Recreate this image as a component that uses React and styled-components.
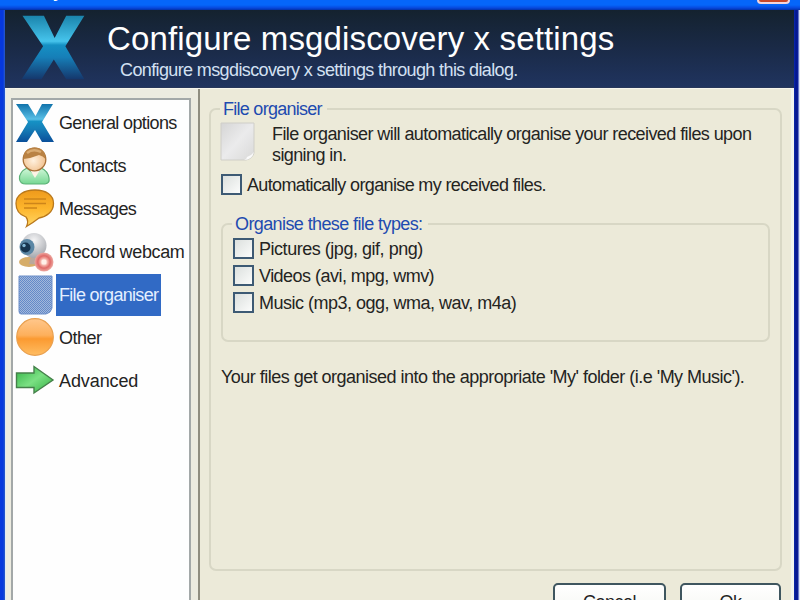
import React from 'react'
import styled, { createGlobalStyle } from 'styled-components'

const GlobalStyle = createGlobalStyle`
    * {
        box-sizing: border-box;
    }

    body {
        margin: 0;
        overflow: hidden;
        font-family: "Liberation Sans", Arial, sans-serif;
        font-size: 18px;
        color: #24241f;
    }
`;

const Window = styled.div`
    width: 800px;
    height: 600px;
    display: flex;
    flex-direction: column;
    overflow: hidden;
    background: #0a3fd0;
`;

const TitleBar = styled.div`
    flex: none;
    position: relative;
    height: 10px;
    background: linear-gradient(#0566fa 0, #0566fa 5px, #0747dc 8px, #0230a8 10px);
`;

const TitleTail = styled.span`
    position: absolute;
    left: 53px;
    top: -17px;
    font-size: 17px;
    font-weight: bold;
    line-height: 20px;
    color: #fff;
`;

const CloseButton = styled.div`
    position: absolute;
    right: 10px;
    top: -20px;
    width: 33px;
    height: 24px;
    border: 2px solid #f3d5dc;
    border-radius: 4px;
    background: #c84628;
`;

const Frame = styled.div`
    flex: 1;
    min-height: 0;
    display: flex;
    flex-direction: column;
    border-left: 5px solid #0d43d4;
    border-right: 6px solid #0a1f9c;
    border-image: linear-gradient(90deg, #0638dd 0, #0638dd 3px, #2a5cc8 5px, #0a2aae 794px, #04158c 796px, #0a1f9c 798px, #c8d4f4 799px, #eef2fc 800px) 0 6 0 5;
`;

const Header = styled.header`
    flex: none;
    height: 78px;
    display: flex;
    background: linear-gradient(#14222f, #1a2a47 50%, #20345f);
    border-bottom: 1px solid #27375a;
`;

const HeaderLogo = styled.div`
    width: 102px;
    padding: 5px 0 0 15px;
`;

const HeaderText = styled.div`
    display: flex;
    flex-direction: column;
    white-space: nowrap;
`;

const Title = styled.h1`
    margin: 10px 0 0;
    font-size: 33px;
    line-height: 38px;
    font-weight: normal;
    letter-spacing: 0.15px;
    color: #fff;
`;

const Subtitle = styled.p`
    margin: 1px 0 0 13px;
    line-height: 22px;
    letter-spacing: ${(props) => props.$spacing}px;
    color: #d3e0f2;
`;

const Body = styled.div`
    flex: 1;
    min-height: 0;
    display: flex;
    background: #ecead9;
    border-top: 1px solid #f6f5ec;
`;

const Sidebar = styled.nav`
    width: 195px;
    padding: 9px 7px 0 5px;
    background: #ecebe0;
    border-right: 2px solid #8f8d80;
    border-left: 1px solid #dfe9f4;
`;

const Tree = styled.ul`
    height: 520px;
    margin: 0;
    padding: 1px 0 0 2px;
    list-style: none;
    background: #fefefe;
    border: 2px solid #a3a8a8;
`;

const TreeItem = styled.li`
    height: 43px;
    display: flex;
    align-items: center;
`;

const TreeIcon = styled.svg`
    flex: none;
    width: ${(props) => props.$size || 40}px;
    height: ${(props) => props.$size || 40}px;
`;

const TreeLabel = styled.span`
    height: 42px;
    line-height: 43px;
    margin-left: 1px;
    padding: 0 3px;
    white-space: nowrap;
    letter-spacing: ${(props) => props.$spacing}px;
    color: ${(props) => (props.$selected ? '#e4efff' : '#24241f')};
    background: ${(props) => (props.$selected ? '#316ac5' : 'transparent')};
`;

const Content = styled.main`
    flex: 1;
    min-width: 0;
    display: flex;
    flex-direction: column;
    padding: 9px 9px 0;
    border-right: 3px solid #f0f3ef;
`;

const GroupBox = styled.fieldset`
    flex: none;
    min-width: 0;
    margin: ${(props) => props.$margin || '0'};
    width: ${(props) => props.$width}px;
    height: ${(props) => props.$height}px;
    padding: ${(props) => props.$padding || '0'};
    border: 2px solid #d8d7c5;
    border-radius: 7px;
`;

const Legend = styled.legend`
    margin-left: ${(props) => props.$indent}px;
    padding: 0 5px 0 3px;
    height: 22px;
    line-height: 22px;
    white-space: nowrap;
    letter-spacing: ${(props) => props.$spacing}px;
    color: #1e4bb0;
`;

const Intro = styled.div`
    display: flex;
    gap: 12px;
    height: 51px;
    padding: 2px 0 0 9px;
`;

const Description = styled.p`
    margin: 2px 0 0;
    line-height: 21px;
    white-space: nowrap;
`;

const Line = styled.span`
    display: block;
    white-space: nowrap;
    letter-spacing: ${(props) => props.$spacing}px;
`;

const CheckRow = styled.label`
    display: flex;
    align-items: center;
    height: 27px;
    gap: 5px;
    padding-left: ${(props) => props.$indent || 0}px;
    line-height: 22px;
`;

const CheckBox = styled.span`
    flex: none;
    width: 21px;
    height: 21px;
    border: 2px solid #3d5a74;
    background: linear-gradient(135deg, #dce0de, #fbfcfb);
`;

const Note = styled.p`
    margin: 24px 0 0 10px;
    line-height: 22px;
`;

const Buttons = styled.div`
    display: flex;
    justify-content: flex-end;
    gap: 14px;
    margin: 12px 1px 0 0;
`;

const Button = styled.button`
    flex: none;
    width: ${(props) => props.$width}px;
    height: 38px;
    padding: 0;
    border: 2px solid #3f565f;
    border-radius: 5px;
    background: linear-gradient(#fff, #f4f5f0);
    font: inherit;
    line-height: 34px;
    letter-spacing: -0.5px;
    color: #24241f;
`;

const XIcon = ({ id, top, middle, bottom, size, points }) => (
    <TreeIcon viewBox="0 0 40 40" $size={size}>
        <defs>
            <linearGradient id={id} x1="0" y1="0" x2="0" y2="1">
                <stop offset="0" stopColor={top} />
                <stop offset="0.4" stopColor={middle} />
                <stop offset="0.46" stopColor="#1591c4" />
                <stop offset="0.65" stopColor="#167fb8" />
                <stop offset="1" stopColor={bottom} />
            </linearGradient>
        </defs>
        <polygon points={points} fill={`url(#${id})`} />
    </TreeIcon>
);

const ContactIcon = () => (
    <TreeIcon viewBox="0 0 40 40">
        <defs>
            <radialGradient id="face" cx="0.45" cy="0.55" r="0.6">
                <stop offset="0" stopColor="#fff1df" />
                <stop offset="1" stopColor="#f0bc86" />
            </radialGradient>
            <linearGradient id="shirt" x1="0" y1="0" x2="0" y2="1">
                <stop offset="0" stopColor="#d2f7da" />
                <stop offset="1" stopColor="#76d792" />
            </linearGradient>
        </defs>
        <path d="M12 22 Q4 26 4.500 33 Q5 38 11 38 H30 Q35 37 34 32 Q33 25 26 22 L20 29 Z" fill="url(#shirt)" stroke="#5cb277" strokeWidth="1.200" />
        <path d="M13 21 L20 32 L27 21 Z" fill="#fdf3e6" />
        <circle cx="19.500" cy="13.500" r="11.300" fill="url(#face)" stroke="#a87038" strokeWidth="1.300" />
        <path d="M8.500 13 C8 5 13 1.500 19.500 1.500 C27 1.500 31 6 30.500 13 Q28 10 24 9 Q17 12 8.500 13 Z" fill="#b98244" />
        <path d="M12 7 Q18 2 26 6" stroke="#d9ab72" strokeWidth="2.500" fill="none" />
    </TreeIcon>
);

const MessageIcon = () => (
    <TreeIcon viewBox="0 0 40 40">
        <defs>
            <linearGradient id="bubble" x1="0" y1="0" x2="0" y2="1">
                <stop offset="0" stopColor="#ee9a1c" />
                <stop offset="0.500" stopColor="#fdb52c" />
                <stop offset="1" stopColor="#ffd766" />
            </linearGradient>
        </defs>
        <path d="M20 1 C31 1 38.500 6 38.500 14.500 C38.500 23 31 28 24 29 Q19 33 11.500 37.500 Q14 32 11 28 C5 26 1 21 1 14.500 C1 6 9 1 20 1 Z" fill="url(#bubble)" stroke="#b9781c" strokeWidth="1.300" />
        <path d="M9 10 H31 M9 14.500 H31 M9 19 H22" stroke="#cd851a" strokeWidth="1.500" />
    </TreeIcon>
);

const WebcamIcon = () => (
    <TreeIcon viewBox="0 0 40 40">
        <defs>
            <radialGradient id="cam" cx="0.500" cy="0.300" r="0.700">
                <stop offset="0" stopColor="#f5f5f6" />
                <stop offset="1" stopColor="#a5a8ae" />
            </radialGradient>
            <radialGradient id="record">
                <stop offset="0" stopColor="#ffece6" />
                <stop offset="0.350" stopColor="#f6b5ac" />
                <stop offset="0.650" stopColor="#e06a68" />
                <stop offset="1" stopColor="#ecaaa2" />
            </radialGradient>
        </defs>
        <ellipse cx="14" cy="30" rx="10" ry="5" fill="#d6ad69" />
        <path d="M16 24 L29 24 L30 33 L14 32 Z" fill="#b9a89c" />
        <circle cx="19" cy="13.500" r="12.500" fill="url(#cam)" />
        <ellipse cx="12" cy="15" rx="7.500" ry="8" fill="#5b87a5" />
        <circle cx="10.500" cy="15.500" r="5" fill="#17354f" />
        <circle cx="9" cy="13.500" r="1.700" fill="#83b8d6" />
        <circle cx="29" cy="30" r="9.500" fill="url(#record)" />
        <rect x="26.500" y="27.500" width="5" height="5" rx="1.500" fill="#fff0e9" />
    </TreeIcon>
);

const SelectedFileIcon = () => (
    <TreeIcon viewBox="0 0 40 40">
        <defs>
            <pattern id="dither" width="2" height="2" patternUnits="userSpaceOnUse">
                <rect width="2" height="2" fill="#a3b8db" />
                <rect width="1" height="1" fill="#648ac8" />
                <rect x="1" y="1" width="1" height="1" fill="#648ac8" />
            </pattern>
        </defs>
        <path d="M4 1 H37 V33 Q36 38 31 39 H6 Q4 39 4 36 Z" fill="url(#dither)" stroke="#6d8fc9" strokeWidth="1" />
    </TreeIcon>
);

const OtherIcon = () => (
    <TreeIcon viewBox="0 0 40 40">
        <defs>
            <linearGradient id="orange" x1="0" y1="0" x2="0" y2="1">
                <stop offset="0" stopColor="#ffc78c" />
                <stop offset="0.450" stopColor="#fdb05c" />
                <stop offset="0.550" stopColor="#fb9a31" />
                <stop offset="1" stopColor="#ffbd62" />
            </linearGradient>
        </defs>
        <circle cx="20" cy="19" r="18.300" fill="url(#orange)" stroke="#e9a04f" strokeWidth="1.200" />
    </TreeIcon>
);

const ArrowIcon = () => (
    <TreeIcon viewBox="0 0 40 40">
        <defs>
            <linearGradient id="green" x1="0" y1="0" x2="1" y2="1">
                <stop offset="0" stopColor="#2fb143" />
                <stop offset="0.500" stopColor="#7be083" />
                <stop offset="1" stopColor="#2fae3f" />
            </linearGradient>
        </defs>
        <path d="M1.500 12 H19 V5.500 L38 19 L19 32 V26.500 H1.500 Z" fill="url(#green)" stroke="#45804a" strokeWidth="1.400" />
    </TreeIcon>
);

const PageIcon = () => (
    <TreeIcon viewBox="0 0 40 40">
        <defs>
            <linearGradient id="page" x1="0" y1="0" x2="1" y2="1">
                <stop offset="0" stopColor="#d5d5d5" />
                <stop offset="0.500" stopColor="#ebebec" />
                <stop offset="1" stopColor="#d9d9d8" />
            </linearGradient>
        </defs>
        <path d="M1 1 H34 V31 Q32 37 26 38 H1 Z" fill="url(#page)" stroke="#cfcec8" strokeWidth="1" />
        <path d="M34 30 Q32 33 27 35 Q27 37 24 38 Q32 38 34 30 Z" fill="#fafafa" />
    </TreeIcon>
);

const SmallLogo = () => (
    <XIcon id="smallX" top="#1173ab" middle="#58bfe6" bottom="#0a4f9a" points="1,1 13,1 20.500,13 27,1 38,1 27,19 39,39 27,39 20,27 12,39 1,39 13,19" />
);

const items = [
    { label: 'General options', icon: SmallLogo, spacing: -0.63 },
    { label: 'Contacts', icon: ContactIcon, spacing: -0.5 },
    { label: 'Messages', icon: MessageIcon, spacing: -0.6 },
    { label: 'Record webcam', icon: WebcamIcon, spacing: -0.35 },
    { label: 'File organiser', icon: SelectedFileIcon, spacing: -0.7, selected: true },
    { label: 'Other', icon: OtherIcon, spacing: -0.5 },
    { label: 'Advanced', icon: ArrowIcon, spacing: -0.1 },
];

const fileTypes = [
    { label: 'Pictures (jpg, gif, png)', spacing: -0.47 },
    { label: 'Videos (avi, mpg, wmv)', spacing: -0.53 },
    { label: 'Music (mp3, ogg, wma, wav, m4a)', spacing: -0.5 },
];

const App = () => {
    return (
        <Window>
            <GlobalStyle />
            <TitleBar>
                <TitleTail>y</TitleTail>
                <CloseButton />
            </TitleBar>
            <Frame>
                <Header>
                    <HeaderLogo>
                        <XIcon id="bigX" size={66} top="#1a84ac" middle="#46c4ec" bottom="#15376c" points="1.500,0.500 14.500,0.500 21,14 28,0.500 39,0.500 27.500,19 39,39 28,39 20.500,27 13,39 1,39 14,19" />
                    </HeaderLogo>
                    <HeaderText>
                        <Title>Configure msgdiscovery x settings</Title>
                        <Subtitle $spacing={-0.62}>Configure msgdiscovery x settings through this dialog.</Subtitle>
                    </HeaderText>
                </Header>
                <Body>
                    <Sidebar>
                        <Tree>
                            {items.map(({ label, icon: Icon, spacing, selected }) => (
                                <TreeItem key={label}>
                                    <Icon />
                                    <TreeLabel $spacing={spacing} $selected={selected}>{label}</TreeLabel>
                                </TreeItem>
                            ))}
                        </Tree>
                    </Sidebar>
                    <Content>
                        <GroupBox $width={573} $height={473}>
                            <Legend $indent={9} $spacing={-0.73}>File organiser</Legend>
                            <Intro>
                                <PageIcon />
                                <Description>
                                    <Line $spacing={-0.58}>File organiser will automatically organise your received files upon</Line>
                                    <Line $spacing={-0.6}>signing in.</Line>
                                </Description>
                            </Intro>
                            <CheckRow $indent={10}>
                                <CheckBox />
                                <Line $spacing={-0.64}>Automatically organise my received files.</Line>
                            </CheckRow>
                            <GroupBox $margin="15px 0 0 10px" $width={549} $height={129} $padding="0 0 0 10px">
                                <Legend $indent={-1} $spacing={-0.6}>Organise these file types:</Legend>
                                {fileTypes.map(({ label, spacing }) => (
                                    <CheckRow key={label}>
                                        <CheckBox />
                                        <Line $spacing={spacing}>{label}</Line>
                                    </CheckRow>
                                ))}
                            </GroupBox>
                            <Note>
                                <Line $spacing={-0.52}>Your files get organised into the appropriate 'My' folder (i.e 'My Music').</Line>
                            </Note>
                        </GroupBox>
                        <Buttons>
                            <Button $width={113}>Cancel</Button>
                            <Button $width={101}>Ok</Button>
                        </Buttons>
                    </Content>
                </Body>
            </Frame>
        </Window>
    )
}

export default App
